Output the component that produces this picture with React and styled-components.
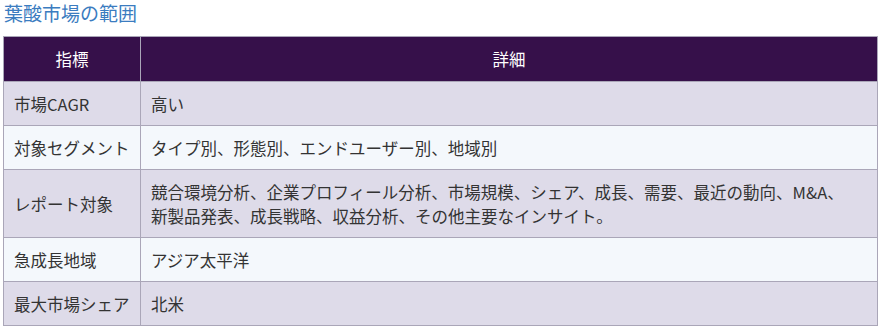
import React from "react";
import styled, { createGlobalStyle } from "styled-components";

const Global = createGlobalStyle`
  body {
    margin: 0;
    background: #ffffff;
    font-family: "Noto Sans CJK JP", "Noto Sans", sans-serif;
  }
`;

const Page = styled.div`
  padding: 0 5px 0 3px;
`;

const Title = styled.h2`
  margin: 0 0 10px;
  padding: 0 0 0 1px;
  font-size: 19px;
  font-weight: 400;
  line-height: 26px;
  color: #3b7cc0;
`;

const Table = styled.table`
  width: 875px;
  table-layout: fixed;
  border-collapse: collapse;
  border: 1px solid #aaa6b8;
  font-size: 16.5px;
  color: #333333;
`;

const Head = styled.th`
  box-sizing: border-box;
  background: #36104a;
  color: #ffffff;
  font-weight: 400;
  height: 45px;
  padding: 0 8px;
  text-align: center;
  border: 1px solid #aaa6b8;
  width: ${(p) => p.$w || "auto"};
`;

const Row = styled.tr`
  background: ${(p) => (p.$alt ? "#f4f8fc" : "#dedbe9")};
`;

const Cell = styled.td`
  border: 1px solid #aaa6b8;
  padding: 10px 18px 9px 10px;
  line-height: 24px;
  vertical-align: middle;
  white-space: ${(p) => (p.$nowrap ? "nowrap" : "normal")};
`;

const rows = [
  ["市場CAGR", "高い"],
  ["対象セグメント", "タイプ別、形態別、エンドユーザー別、地域別"],
  [
    "レポート対象",
    "競合環境分析、企業プロフィール分析、市場規模、シェア、成長、需要、最近の動向、M&A、新製品発表、成長戦略、収益分析、その他主要なインサイト。",
  ],
  ["急成長地域", "アジア太平洋"],
  ["最大市場シェア", "北米"],
];

export default function App() {
  return (
    <Page>
      <Global />
      <Title>葉酸市場の範囲</Title>
      <Table>
        <thead>
          <tr>
            <Head $w="137px">指標</Head>
            <Head>詳細</Head>
          </tr>
        </thead>
        <tbody>
          {rows.map(([k, v], i) => (
            <Row key={k} $alt={i % 2 === 1}>
              <Cell $nowrap>{k}</Cell>
              <Cell>{v}</Cell>
            </Row>
          ))}
        </tbody>
      </Table>
    </Page>
  );
}
